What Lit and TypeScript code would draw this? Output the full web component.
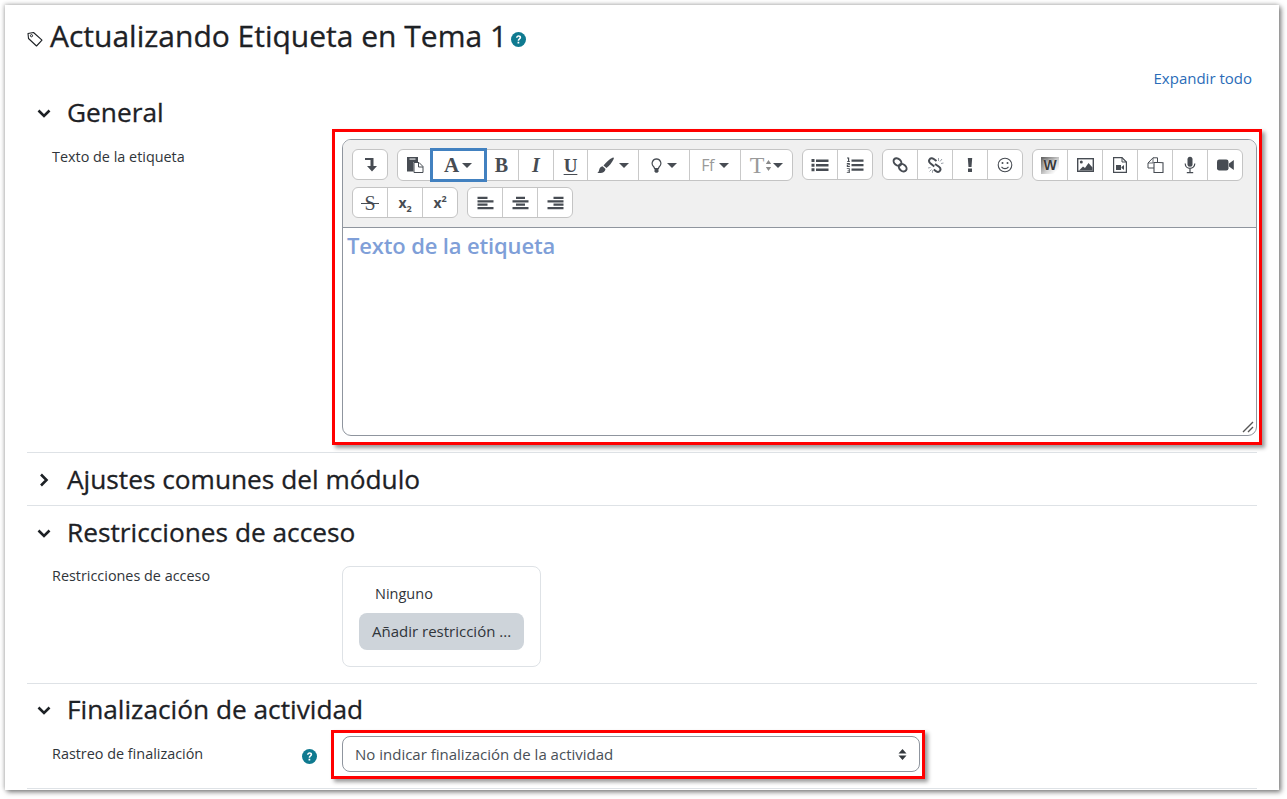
import { LitElement, html, css, svg } from "lit";
import { customElement } from "lit/decorators.js";

const ic = (w: number, h: number, body: unknown) =>
  html`<svg width=${w} height=${h} viewBox="0 0 ${w} ${h}" class="ic">${body}</svg>`;
const D = "#474c53";

const caret = html`<span class="caret"></span>`;

const icons: Record<string, unknown> = {
  toggle: ic(16, 16, svg`<path d="M3 1h8.500v8H15l-5 5.500L5 9h3.500V3H3z" fill="${D}"/>`),
  paste: ic(18, 16, svg`<path d="M1 0h11v5H7.500v9.500H1z" fill="${D}"/><rect x="3.500" y="1.200" width="6" height="1.800" fill="#aeb1b5"/><path d="M8 5.500h5l4 4V15.500H8z" fill="#fff" stroke="${D}" stroke-width="1"/><path d="M12.500 5.500v4.500H17" fill="none" stroke="${D}"/>`),
  brush: ic(17, 16, svg`<path d="M16 .5c.6 0 1 .5.8 1.200C15.500 5 12 9 9.500 11L6.500 8.500C8.500 6 12 2 16 .5z" fill="${D}"/><path d="M5.500 9.200 8.500 12c-.3 2.500-2.500 4-5 4H.3c1.300-1 1.700-2 1.900-3.200.3-1.800 1.500-3.400 3.300-3.600z" fill="${D}"/>`),
  bulb: ic(11, 15, svg`<path d="M5.500.8a4.500 4.500 0 0 0-3 7.700c.6.6.9 1.300 1 2h4c.1-.7.4-1.400 1-2a4.500 4.500 0 0 0-3-7.700z" fill="#fff" stroke="${D}" stroke-width="1.200"/><path d="M3.500 10.200h4v3l-1 1.500h-2l-1-1.500z" fill="${D}"/>`),
  tarrows: ic(7, 13, svg`<path d="M.8 5 3.500 1l2.700 4zM.8 8l2.700 4 2.700-4z" fill="#8a8a8a"/>`),
  ul: ic(18, 14, svg`<path d="M5 1.500h12.500v2.400H5zM5 6h12.500v2.400H5zM5 10.500h12.500v2.400H5z" fill="${D}"/><path d="M.5 1h3v3h-3zM.5 5.700h3v3h-3zM.5 10.200h3v3h-3z" fill="${D}"/>`),
  ol: ic(18, 16, svg`<path d="M5.500 2.500h12v2.200h-12zM5.500 7h12v2.200h-12zM5.500 11.500h12v2.200h-12z" fill="${D}"/><path d="M1 .6h2.200v3.600H4v.8H1v-.8h1V1.400H1zM.8 6h3v2.200H2l-.2.8h2V10H.8V7.600h1.900V7H.8zM.8 11.200h3V16H.8v-.8h2v-1H1.500v-.6h1.300v-1.600h-2z" fill="${D}"/>`),
  link: ic(16, 16, svg`<g fill="none" stroke="${D}" stroke-width="2"><ellipse cx="5.500" cy="5" rx="4.300" ry="3.200" transform="rotate(40 5.500 5)"/><ellipse cx="10.700" cy="10.700" rx="4.300" ry="3.200" transform="rotate(40 10.700 10.700)"/></g>`),
  unlink: ic(17, 16, svg`<g fill="none" stroke="${D}" stroke-width="2"><path d="M9.500 4 6.800 2C5 .8 3.300 1.200 2.500 2.500 1.700 3.800 2 5.200 3.300 6.300l4 3.200"/><path d="M8 7l4 2.800c1.500 1.200 1.800 2.700 1 3.900-.8 1.200-2.500 1.500-4 .5l-2.200-1.700"/></g><path d="M11.500 1v3M15 2l-2 2.500M16.500 6l-2.500.5M1 11l2.500-.5M2.500 14.500l2-2M5.500 15.800v-2.500" stroke="#9aa0a8" stroke-width="1"/>`),
  bang: ic(6, 16, svg`<path d="M.8 1h4.400l-.7 9H1.500zM1 11.500h4V15H1z" fill="${D}"/>`),
  smile: ic(16, 16, svg`<circle cx="8" cy="8" r="6.800" fill="none" stroke="${D}" stroke-width="1.100"/><circle cx="5.500" cy="6" r="1" fill="${D}"/><circle cx="10.500" cy="6" r="1" fill="${D}"/><path d="M4.500 9.800c1.800 2.400 5.200 2.400 7 0" fill="none" stroke="${D}" stroke-width="1.100"/>`),
  image: ic(17, 14, svg`<rect x=".7" y=".7" width="15.600" height="12.600" fill="#fff" stroke="${D}" stroke-width="1.400"/><circle cx="4.300" cy="4" r="1.500" fill="${D}"/><path d="M2 12.500l4-4 2 1.500L11.500 5 15.500 9.500v3z" fill="${D}"/>`),
  video: ic(14, 16, svg`<path d="M.6.6h8.400l4.400 4.400v10.400H.6z" fill="#fff" stroke="${D}" stroke-width="1.200"/><path d="M9 .6V5h4.400" fill="none" stroke="${D}" stroke-width="1"/><path d="M3 8h5v5H3zM8.500 10l2.500-2v5l-2.500-2z" fill="${D}"/>`),
  copy: ic(17, 16, svg`<path d="M1 6 6 .8h4.500v4.700H7.500v5.500H1z" fill="#fff" stroke="${D}" stroke-width="1"/><path d="M7 5.500h5l4 .2v9.800H7z" fill="#fff" stroke="${D}" stroke-width="1.100"/><path d="M1 6h5V.8" fill="none" stroke="${D}" stroke-width=".8"/>`),
  mic: ic(12, 18, svg`<rect x="3.500" y=".8" width="5" height="10" rx="2.500" fill="${D}"/><path d="M1.200 7.500c0 6.400 9.600 6.400 9.600 0M6 12.500V16M2.800 16.700h6.400" fill="none" stroke="${D}" stroke-width="1.200"/>`),
  cam: ic(17, 12, svg`<rect x="0" y=".5" width="11.500" height="11" rx="2.200" fill="${D}"/><path d="M12 4.500 16.800 1v10L12 7.500z" fill="${D}"/>`),
  alignl: ic(17, 14, svg`<path d="M.5.800h10v2.200H.5zM.5 4.200h16v2.200H.5zM.5 7.600h10v2.200H.5zM.5 11h16v2.200H.5z" fill="${D}"/>`),
  alignc: ic(17, 14, svg`<path d="M4 .8h9v2.200H4zM.5 4.200h16v2.200H.5zM4 7.600h9v2.200H4zM.5 11h16v2.200H.5z" fill="${D}"/>`),
  alignr: ic(17, 14, svg`<path d="M6.500.8h10v2.200h-10zM.5 4.200h16v2.200H.5zM6.500 7.600h10v2.200h-10zM.5 11h16v2.200H.5z" fill="${D}"/>`),
};

const chevDown = html`<svg class="chev" width="14" height="14" viewBox="0 0 14 14"><path d="M1.500 4.500l5.500 5.500 5.500-5.500" fill="none" stroke="#1d2125" stroke-width="2.600"/></svg>`;
const chevRight = html`<svg class="chev" width="14" height="14" viewBox="0 0 14 14"><path d="M4 1.500l5.500 5.500-5.500 5.500" fill="none" stroke="#1d2125" stroke-width="2.600"/></svg>`;
const help = (s: number) => html`<svg width=${s} height=${s} viewBox="0 0 14 14"><circle cx="7" cy="7" r="7" fill="#0f7a90"/><path d="M4.700 5.400C4.800 3.900 5.800 3.100 7.100 3.100c1.400 0 2.400.8 2.400 2 0 1.800-1.900 1.700-1.900 3.100H6.200c0-2 1.800-2.100 1.800-3 0-.5-.4-.8-.9-.8-.6 0-1 .4-1 1z M6.100 9.200h1.600v1.600H6.100z" fill="#fff"/></svg>`;

@customElement("app-root")
export class AppRoot extends LitElement {
  static styles = css`
    :host { display: block; font-family: "Open Sans", sans-serif; color: #1d2125; background: #fff; height: 799px; overflow: hidden; }
    .card { margin: 5px 8px 0 5px; height: 785px; background: #fff; box-sizing: border-box; padding: 0 22px; box-shadow: 2px 2px 5px #777, -1px -1px 4px #ccc; }
    .title { height: 64px; display: flex; align-items: center; gap: 7px; }
    .title > svg { margin-top: 3px; }
    .title h1 { margin: -2px 0 0; font-size: 30px; font-weight: 500; line-height: 64px; -webkit-text-stroke: .3px #1d2125; }
    .title .hlp { display: flex; margin: 4px 0 0 -3px; }
    .expand { height: 19px; line-height: 19px; text-align: right; font-size: 15px; color: #2a6cb8; margin-right: 5px; }
    .sec { border-bottom: 1px solid #dee2e6; padding-top: 7px; padding-bottom: 16px; }
    .sec.first { margin-top: 5px; padding-top: 0; }
    .sec.closed { padding-bottom: 5px; }
    .sec.last { padding-top: 6px; }
    .hdr { height: 40px; display: flex; align-items: center; padding-left: 10px; }
    .chev { flex: none; margin-right: 16px; }
    .hdr h3 { margin: -2px 0 0; font-size: 26.25px; font-weight: 500; line-height: 40px; -webkit-text-stroke: .3px #1d2125; }
    .row { display: grid; grid-template-columns: 290px 1fr; padding-left: 25px; }
    .lbl { font-size: 14.4px; color: #30353a; line-height: 18px; display: flex; justify-content: space-between; }
    .mark { border: 3px solid #f00; box-shadow: 3px 3px 4px #999; background: #fff; position: relative; }
    .mark.ed { margin: -10px -5px -9px -10px; padding: 7px 2px 6px 7px; }
    .mark.sel { margin: -7px 0 -7px -11px; padding: 3px 2px 4px 8px; width: 578px; }
    .editor { height: 297px; box-sizing: border-box; border: 1px solid #8f959e; border-radius: 9px; overflow: hidden; display: flex; flex-direction: column; }
    .tb { height: 88px; flex: none; box-sizing: border-box; background: #f0f0f0; border-bottom: 1px solid #8f959e; padding: 9px 9px 0; }
    .tr { display: flex; align-items: flex-start; gap: 9px; height: 38px; }
    .grp { display: flex; height: 31px; background: #fff; border: 1px solid #c4c4c4; border-radius: 6px; box-sizing: border-box; }
    .grp.tall { height: 32px; }
    .b { width: 35px; box-sizing: border-box; display: flex; align-items: center; justify-content: center; gap: 5px; border-right: 1px solid #c9c9c9; color: #474c53; position: relative; }
    .b:last-child { border-right: none; width: 34px; }
    .b.n34 { width: 34px; }
    .b.w53 { width: 53px; gap: 3px; }
    .b.w51 { width: 51px; }
    .b.tight { gap: 1px; }
    .focus { outline: 3px solid #4281c0; outline-offset: -1px; z-index: 1; }
    .caret { width: 0; height: 0; border-left: 5.5px solid transparent; border-right: 5.5px solid transparent; border-top: 5px solid #474c53; }
    .ic { display: block; flex: none; }
    .ser { font-family: "Liberation Serif", serif; font-weight: 700; font-size: 20px; line-height: 1; }
    .big { font-size: 21px; }
    .i { font-style: italic; }
    .u { text-decoration: underline; text-decoration-thickness: 1px; text-underline-offset: 2px; font-size: 19px; }
    .ff { font-family: "Open Sans", sans-serif; font-weight: 400; font-size: 16px; line-height: 1; color: #9a9a9a; letter-spacing: -.5px; }
    .tt { font-family: "Liberation Serif", serif; font-size: 24px; line-height: 1; color: #9a9a9a; }
    .s { font-family: "Liberation Serif", serif; font-size: 20px; line-height: 1; color: #474c53; position: relative; }
    .s::after { content: ""; position: absolute; left: -3px; right: -3px; top: 10px; height: 1px; background: #474c53; }
    .sub { font-family: "Open Sans", sans-serif; font-weight: 700; font-size: 14px; color: #474c53; }
    .sub sub, .sub sup { font-size: 9px; line-height: 0; }
    .w { width: 18px; height: 17px; box-sizing: border-box; background: linear-gradient(135deg, #666 5%, #d8d8d8 60%, #fff 85%); font: 700 14px "Liberation Sans", sans-serif; color: #3a3a3a; text-shadow: 0 0 2px #fff; display: flex; align-items: center; justify-content: center; }
    .body { flex: 1; padding: 2px 4px; font-size: 22px; line-height: 30px; font-weight: 600; color: #7f9fd8; position: relative; letter-spacing: -0.15px; }
    .grip { position: absolute; right: 2px; bottom: 2px; display: block; }
    .avail { width: 199px; height: 101px; box-sizing: border-box; border: 1px solid #dee2e6; border-radius: 8px; padding: 17px 16px; font-size: 14.5px; color: #30353a; }
    .avail .n { line-height: 19px; padding-left: 16px; }
    .btn { margin-top: 10px; height: 37px; line-height: 37px; background: #ced4da; border-radius: 8px; padding-left: 13px; font-size: 15px; }
    .rowsec { margin-top: 13px; }
    .rowsel { margin-top: 7px; }
    .hlp2 { display: flex; margin: 4px 25px 0 0; }
    .select { height: 36px; box-sizing: border-box; border: 1px solid #8f959e; border-radius: 8px; display: flex; align-items: center; justify-content: space-between; padding: 0 12px; font-size: 15px; color: #495057; }
  `;

  private g(items: unknown[], tall = false) {
    return html`<div class="grp ${tall ? "tall" : ""}">${items}</div>`;
  }
  private b(c: unknown, cls = "") {
    return html`<div class="b ${cls}">${c}</div>`;
  }

  render() {
    const b = this.b;
    return html`
      <div class="card">
        <div class="title">
          <svg width="16" height="18" viewBox="0 0 16 18"><path d="M1 3.500 6.500 2.500 15 10.200 9.500 16 1.500 8.500z" fill="none" stroke="#1d2125" stroke-width="1.100" stroke-linejoin="round"/><circle cx="4.500" cy="5.700" r="1.100" fill="none" stroke="#1d2125"/></svg>
          <h1>Actualizando Etiqueta en Tema 1</h1>
          <span class="hlp">${help(15)}</span>
        </div>
        <div class="expand">Expandir todo</div>

        <section class="sec first">
          <div class="hdr">${chevDown}<h3>General</h3></div>
          <div class="row" style="margin-top:6px">
            <div class="lbl" style="padding-top:9px">Texto de la etiqueta</div>
            <div class="mark ed">
              <div class="editor">
                <div class="tb">
                  <div class="tr">
                    ${this.g([b(icons.toggle)])}
                    ${this.g([
                      b(icons.paste, "n34"),
                      b(html`<span class="ser big">A</span>${caret}`, "w53 focus"),
                      b(html`<span class="ser">B</span>`, "n34"),
                      b(html`<span class="ser i">I</span>`),
                      b(html`<span class="ser u">U</span>`, "n34"),
                      b(html`${icons.brush}${caret}`, "w51"),
                      b(html`${icons.bulb}${caret}`, "w51"),
                      b(html`<span class="ff">Ff</span>${caret}`, "w51"),
                      b(html`<span class="tt">T</span>${icons.tarrows}${caret}`, "w51 tight"),
                    ], true)}
                    ${this.g([b(icons.ul), b(icons.ol)])}
                    ${this.g([b(icons.link), b(icons.unlink), b(icons.bang), b(icons.smile)])}
                    ${this.g([
                      b(html`<span class="w">W</span>`),
                      b(icons.image), b(icons.video), b(icons.copy), b(icons.mic), b(icons.cam),
                    ], true)}
                  </div>
                  <div class="tr">
                    ${this.g([
                      b(html`<span class="s">S</span>`),
                      b(html`<span class="sub">x<sub>2</sub></span>`),
                      b(html`<span class="sub">x<sup>2</sup></span>`),
                    ])}
                    ${this.g([b(icons.alignl), b(icons.alignc), b(icons.alignr)])}
                  </div>
                </div>
                <div class="body">Texto de la etiqueta
                  <svg class="grip" width="12" height="12" viewBox="0 0 12 12"><path d="M1 11 11 1M6 11l5-5" stroke="#555" stroke-width="1.400" fill="none"/></svg>
                </div>
              </div>
            </div>
          </div>
        </section>

        <section class="sec closed">
          <div class="hdr">${chevRight}<h3>Ajustes comunes del módulo</h3></div>
        </section>

        <section class="sec">
          <div class="hdr">${chevDown}<h3>Restricciones de acceso</h3></div>
          <div class="row rowsec">
            <div class="lbl" style="padding-top:1px">Restricciones de acceso</div>
            <div class="avail">
              <div class="n">Ninguno</div>
              <div class="btn">Añadir restricción ...</div>
            </div>
          </div>
        </section>

        <section class="sec last">
          <div class="hdr">${chevDown}<h3>Finalización de actividad</h3></div>
          <div class="row rowsel">
            <div class="lbl" style="padding-top:8px;align-items:flex-start">Rastreo de finalización<span class="hlp2">${help(15)}</span></div>
            <div class="mark sel">
              <div class="select">
                <span>No indicar finalización de la actividad</span>
                <svg width="9" height="13" viewBox="0 0 9 13"><path d="M4.500 1 8.500 5.500H.5zM4.500 12 .5 7.500h8z" fill="#33383d"/></svg>
              </div>
            </div>
          </div>
        </section>
      </div>
    `;
  }
}
